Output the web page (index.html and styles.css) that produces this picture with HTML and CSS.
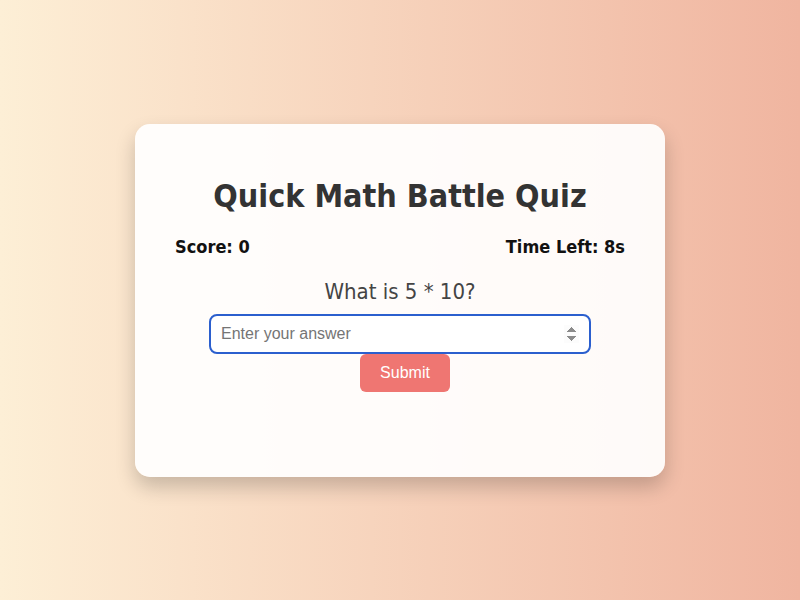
FILE: index.html
```html
<!DOCTYPE html>
<html lang="en">
<head>
    <meta charset="UTF-8">
    <meta name="viewport" content="width=device-width, initial-scale=1.0">
    <title>Quick Math Battle Quiz</title>
    <link rel="stylesheet" href="styles.css">
</head>
<body>
    <div class="quiz-container">
        <h1>Quick Math Battle Quiz</h1>
        <div class="stats">
            <div id="score">Score: 0</div>
            <div id="timer">Time Left: 8s</div>
        </div>
        <div class="question" id="question">What is 5 * 10?</div>
        <div class="answer-row">
            <input type="number" id="answer" placeholder="Enter your answer" autofocus>
            <button id="submitBtn">Submit</button>
        </div>
        <p class="result" id="result"></p>
    </div>
</body>
</html>
```

FILE: styles.css
```css
html, body {
    height: 100%;
}

body {
    margin: 0;
    font-family: "DejaVu Sans Condensed", "DejaVu Sans", sans-serif;
    background: linear-gradient(to right, #fdefd6, #f0b5a0);
    display: flex;
    justify-content: center;
    align-items: center;
}

.quiz-container {
    width: 450px;
    padding: 32px 40px 40px;
    background: rgba(255, 255, 255, 0.92);
    border-radius: 15px;
    box-shadow: 0 10px 20px rgba(0, 0, 0, 0.2);
    text-align: center;
}

h1 {
    font-size: 32px;
    color: #333;
    margin: 21px 0;
}

.stats {
    display: flex;
    justify-content: space-between;
    font-size: 18px;
    font-weight: bold;
    color: #111;
}

.question {
    font-size: 22px;
    color: #444;
    margin: 22px 0 10px;
}

input {
    padding: 10px;
    font-family: "Liberation Sans", Arial, sans-serif;
    font-size: 16px;
    border: 2px solid #2b5fce;
    border-radius: 8px;
    outline: none;
    box-sizing: border-box;
    width: 382px;
    height: 40px;
}

input::placeholder {
    color: #757575;
}

button {
    margin-left: 10px;
    padding: 10px 20px;
    font-family: "Liberation Sans", Arial, sans-serif;
    font-size: 16px;
    color: #fff;
    background: #ef7672;
    border: none;
    border-radius: 6px;
    cursor: pointer;
}

.result {
    min-height: 20px;
    margin: 25px 0 0;
}
```
